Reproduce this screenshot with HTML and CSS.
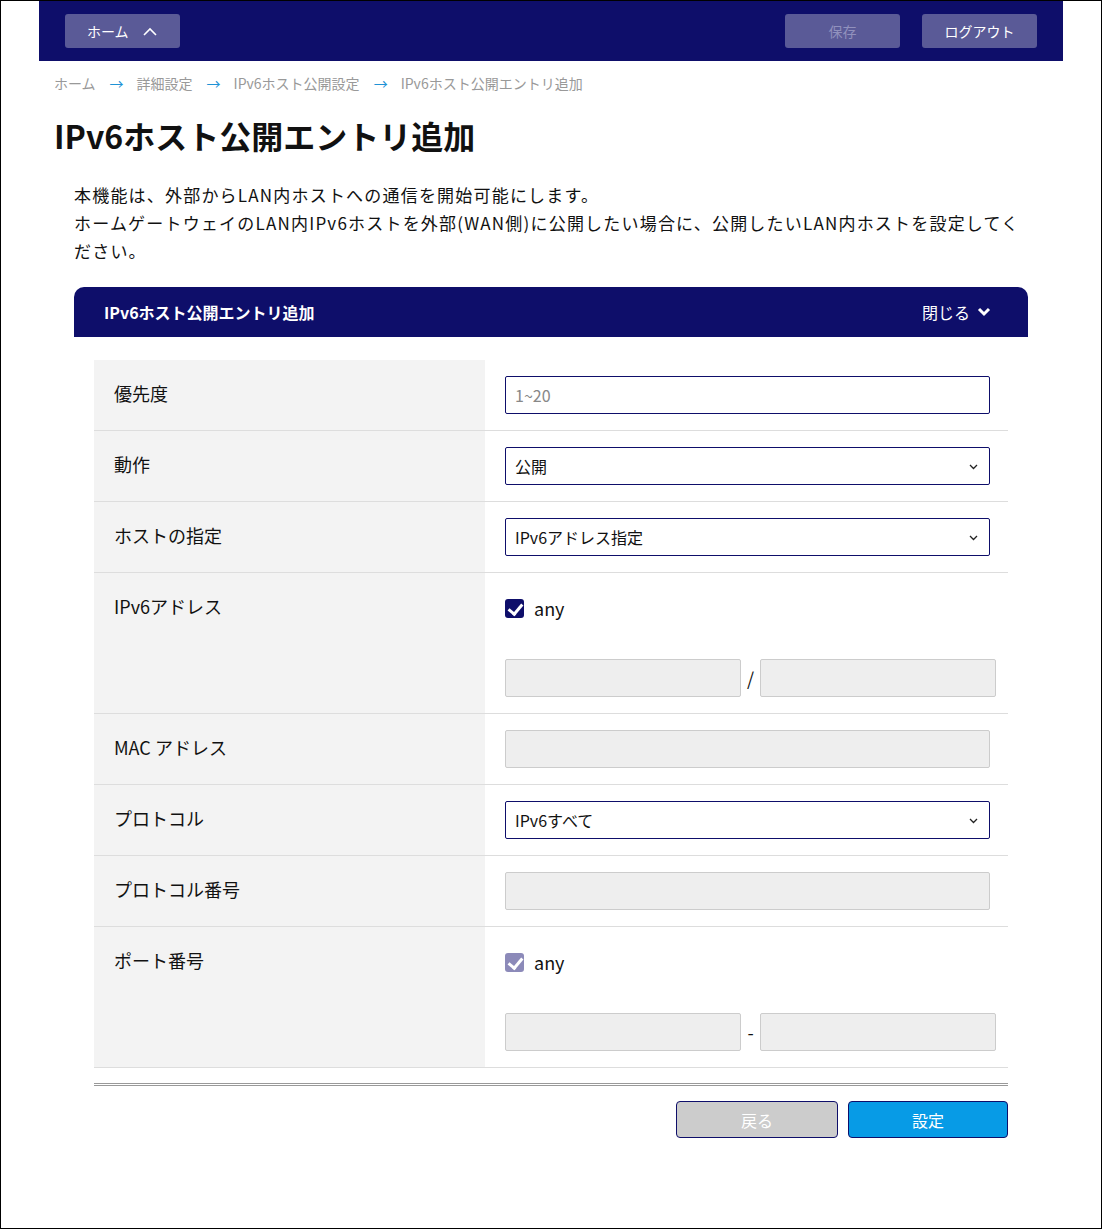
FILE: index.html
```html
<!DOCTYPE html>
<html lang="ja">
<head>
  <meta charset="UTF-8">
  <meta name="viewport" content="width=device-width, initial-scale=1.0">
  <title>IPv6ホスト公開エントリ追加</title>
  <link rel="stylesheet" href="styles.css">
</head>
<body>
  <div class="page">
    <!-- ヘッダー -->
    <header class="topbar">
      <button type="button" class="top-btn home-btn">ホーム
        <svg class="caret" width="14" height="9" viewBox="0 0 14 9"><polyline points="1,8 7,2 13,8" fill="none" stroke="#fff" stroke-width="1.6"/></svg>
      </button>
      <div class="top-right">
        <button type="button" class="top-btn" disabled>保存</button>
        <button type="button" class="top-btn">ログアウト</button>
      </div>
    </header>

    <main class="content">
      <nav class="breadcrumb">
        <span>ホーム</span><span class="arrow">→</span>
        <span>詳細設定</span><span class="arrow">→</span>
        <span>IPv6ホスト公開設定</span><span class="arrow">→</span>
        <span>IPv6ホスト公開エントリ追加</span>
      </nav>

      <h1 class="title">IPv6ホスト公開エントリ追加</h1>

      <p class="desc">本機能は、外部からLAN内ホストへの通信を開始可能にします。<br>ホームゲートウェイのLAN内IPv6ホストを外部(WAN側)に公開したい場合に、公開したいLAN内ホストを設定してください。</p>

      <section class="panel">
        <div class="panel-head">
          <span class="panel-title">IPv6ホスト公開エントリ追加</span>
          <span class="panel-toggle">閉じる
            <svg width="14" height="10" viewBox="0 0 14 10"><polyline points="2,2 7,7 12,2" fill="none" stroke="#fff" stroke-width="3"/></svg>
          </span>
        </div>

        <div class="panel-body">
          <div class="form-table">
            <div class="form-row">
              <div class="form-label">優先度</div>
              <div class="form-value"><input class="field" type="text" placeholder="1~20"></div>
            </div>
            <div class="form-row">
              <div class="form-label">動作</div>
              <div class="form-value">
                <div class="select-wrap">
                  <select class="field select"><option>公開</option></select>
                  <svg class="select-arrow" width="9" height="6" viewBox="0 0 9 6"><polyline points="1,1 4.5,4.5 8,1" fill="none" stroke="#222" stroke-width="1.3"/></svg>
                </div>
              </div>
            </div>
            <div class="form-row">
              <div class="form-label">ホストの指定</div>
              <div class="form-value">
                <div class="select-wrap">
                  <select class="field select"><option>IPv6アドレス指定</option></select>
                  <svg class="select-arrow" width="9" height="6" viewBox="0 0 9 6"><polyline points="1,1 4.5,4.5 8,1" fill="none" stroke="#222" stroke-width="1.3"/></svg>
                </div>
              </div>
            </div>
            <div class="form-row">
              <div class="form-label">IPv6アドレス</div>
              <div class="form-value">
                <label class="check-line"><input type="checkbox" class="check" checked> any</label>
                <div class="pair">
                  <input class="field" type="text" disabled>
                  <span class="sep">/</span>
                  <input class="field" type="text" disabled>
                </div>
              </div>
            </div>
            <div class="form-row">
              <div class="form-label">MAC アドレス</div>
              <div class="form-value"><input class="field" type="text" disabled></div>
            </div>
            <div class="form-row">
              <div class="form-label">プロトコル</div>
              <div class="form-value">
                <div class="select-wrap">
                  <select class="field select"><option>IPv6すべて</option></select>
                  <svg class="select-arrow" width="9" height="6" viewBox="0 0 9 6"><polyline points="1,1 4.5,4.5 8,1" fill="none" stroke="#222" stroke-width="1.3"/></svg>
                </div>
              </div>
            </div>
            <div class="form-row">
              <div class="form-label">プロトコル番号</div>
              <div class="form-value"><input class="field" type="text" disabled></div>
            </div>
            <div class="form-row">
              <div class="form-label">ポート番号</div>
              <div class="form-value">
                <label class="check-line"><input type="checkbox" class="check" checked disabled> any</label>
                <div class="pair">
                  <input class="field" type="text" disabled>
                  <span class="sep">-</span>
                  <input class="field" type="text" disabled>
                </div>
              </div>
            </div>
          </div>

          <div class="actions">
            <button type="button" class="act-btn back-btn">戻る</button>
            <button type="button" class="act-btn set-btn">設定</button>
          </div>
        </div>
      </section>
    </main>
  </div>
</body>
</html>
```

FILE: styles.css
```css
* {
  box-sizing: border-box;
}

body {
  margin: 0;
  font-family: "Noto Sans CJK JP", "Noto Sans", sans-serif;
  color: #111;
  background: #fff;
}

.page {
  height: 1229px;
  border: 1px solid #000;
}

/* ヘッダー */
.topbar {
  width: 1024px;
  height: 60px;
  margin: 0 auto;
  padding: 13px 26px;
  background: #0e0e6a;
  display: flex;
  justify-content: space-between;
}

.top-right {
  display: flex;
  gap: 22px;
}

.top-btn {
  width: 115px;
  height: 34px;
  border: none;
  border-radius: 3px;
  background: #5a5a97;
  color: #fff;
  font-family: inherit;
  font-size: 14px;
  display: flex;
  align-items: center;
  justify-content: center;
  padding: 0;
}

.top-btn:disabled {
  color: #9191bd;
}

.home-btn {
  justify-content: flex-start;
  padding-left: 22px;
  gap: 14px;
}

.content {
  width: 1024px;
  margin: 0 auto;
  padding: 0 35px;
}

.breadcrumb {
  margin: 12px 0 0 -20px;
  font-size: 14px;
  line-height: 20px;
  color: #999;
  display: flex;
}

.breadcrumb .arrow {
  color: #1f93d6;
  margin: 0 13px 0 14px;
}

.title {
  margin: 19px 0 0 -20px;
  font-size: 32px;
  line-height: 46px;
  font-weight: bold;
}

.desc {
  margin: 23px 0 0;
  font-size: 17px;
  line-height: 28px;
  letter-spacing: 1.2px;
}

/* パネル */
.panel {
  margin-top: 22px;
}

.panel-head {
  height: 50px;
  background: #0e0e6a;
  border-radius: 10px 10px 0 0;
  color: #fff;
  padding: 0 37px 0 30px;
  display: flex;
  align-items: center;
  justify-content: space-between;
}

.panel-title {
  font-size: 16px;
  font-weight: bold;
}

.panel-toggle {
  font-size: 16px;
  display: flex;
  align-items: center;
  gap: 7px;
}

.panel-body {
  padding: 23px 20px 0;
}

.form-row {
  display: grid;
  grid-template-columns: 391px 1fr;
  border-bottom: 1px solid #ddd;
}

.form-label {
  background: #f3f3f3;
  padding: 20px 20px;
  font-size: 18px;
  line-height: 26px;
}

.form-value {
  padding: 16px 18px 16px 20px;
}

.field {
  display: block;
  width: 100%;
  height: 38px;
  border: 1px solid #0e0e6a;
  border-radius: 2px;
  background: #fff;
  font-family: inherit;
  font-size: 16px;
  color: #111;
  padding: 0 9px;
}

.field::placeholder {
  color: #888;
}

.field:disabled {
  background: #eee;
  border-color: #ccc;
}

.select-wrap {
  position: relative;
  width: 485px;
}

.select {
  appearance: none;
  padding-right: 30px;
}

.select-arrow {
  position: absolute;
  right: 12px;
  top: 17px;
  pointer-events: none;
}

.check-line {
  height: 38px;
  display: flex;
  align-items: center;
  gap: 10px;
  font-size: 18px;
  margin-bottom: 32px;
}

.check {
  appearance: none;
  position: relative;
  width: 19px;
  height: 19px;
  margin: 0;
  border-radius: 3px;
  background: #0e0e6a;
}

.check:disabled {
  background: #8c8ab9;
}

.check::after {
  content: "";
  position: absolute;
  left: 6px;
  top: 2px;
  width: 6px;
  height: 11px;
  border: solid #fff;
  border-width: 0 3px 3px 0;
  transform: rotate(40deg);
}

.pair {
  width: 491px;
  display: grid;
  grid-template-columns: 236px 1fr 236px;
  align-items: center;
}

.sep {
  text-align: center;
  font-size: 18px;
}

/* ボタン */
.actions {
  margin-top: 15px;
  padding-top: 15px;
  border-top: 3px double #999;
  display: flex;
  justify-content: flex-end;
  gap: 10px;
}

.act-btn {
  height: 37px;
  border: 1px solid #0e0e6a;
  border-radius: 4px;
  color: #fff;
  font-family: inherit;
  font-size: 16px;
}

.back-btn {
  width: 162px;
  background: #ccc;
}

.set-btn {
  width: 160px;
  background: #079be6;
}
```
